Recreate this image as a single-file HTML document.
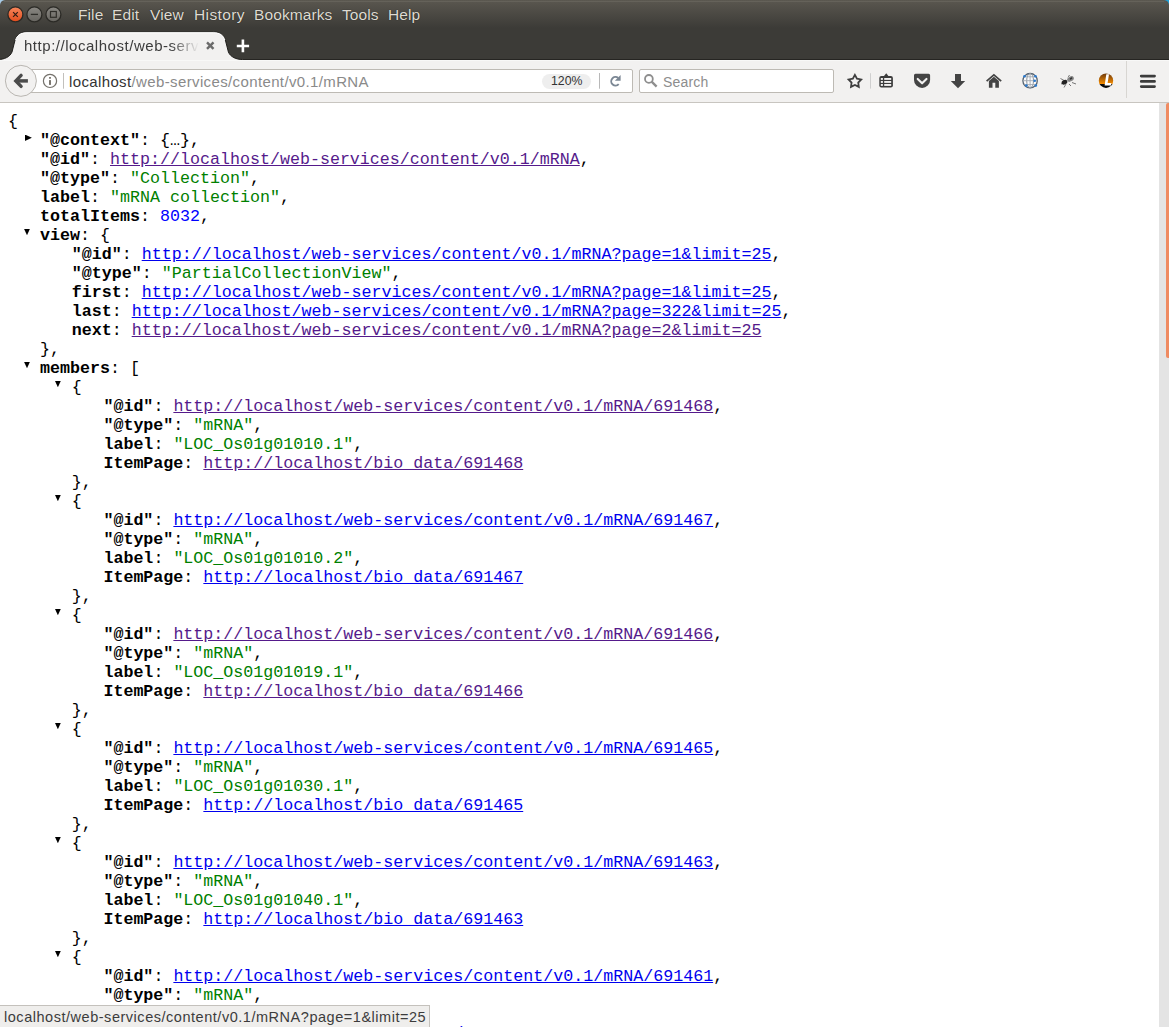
<!DOCTYPE html>
<html><head><meta charset="utf-8">
<style>
html,body{margin:0;padding:0;}
body{width:1169px;height:1027px;overflow:hidden;position:relative;background:#fff;font-family:"Liberation Sans",sans-serif;}
.abs{position:absolute;}
#titlebar{position:absolute;left:0;top:0;width:1169px;height:59px;background:linear-gradient(#5b5850 0px,#56534c 4px,#3c3b37 28px,#3c3b37 59px);}
#tline{position:absolute;left:0;top:59px;width:1169px;height:1px;background:#262522;}
#navbar{position:absolute;left:0;top:60px;width:1169px;height:42px;background:#f2f1f0;}
#navline{position:absolute;left:0;top:102px;width:1169px;height:1px;background:#c8c5c0;}
.menu{position:absolute;top:5px;color:#dfdbd2;font-size:15.5px;line-height:20px;white-space:nowrap;letter-spacing:0.1px;text-shadow:0 0 1px rgba(0,0,0,0.7);}
#content{position:absolute;left:0;top:103px;width:1159px;height:924px;overflow:hidden;background:#fff;}
#json{position:absolute;left:0;top:9px;font-family:"Liberation Mono",monospace;font-size:16.664px;line-height:19px;white-space:pre;color:#000;}
.ln{position:absolute;height:19px;white-space:pre;}
.k{font-weight:bold;}
.s{color:#008000;}
.n{color:#0000ff;}
.u{color:#0000ee;text-decoration:underline;}
.v{color:#551a8b;text-decoration:underline;}
.tr{position:absolute;width:7px;height:6.3px;margin:3.6px 0 0 0;background:#000;clip-path:polygon(0 0,100% 50%,0 100%);}
.td{position:absolute;width:6.2px;height:6.7px;margin:2.5px 0 0 0;background:#000;clip-path:polygon(0 0,100% 0,50% 100%);}
#sb{position:absolute;left:1159px;top:103px;width:10px;height:924px;background:#e4e4e4;}
#thumb{position:absolute;left:1166px;top:103px;width:3px;height:255px;background:#ef8b62;border-radius:2px 0 0 2px;}
#status{position:absolute;left:0;top:1005px;width:430px;height:22px;background:#efeeec;border-top:1px solid #c4c1bc;border-right:1px solid #c4c1bc;box-sizing:border-box;}
#status span{position:absolute;left:4px;top:3px;font-size:14.5px;line-height:16px;color:#3c3c3c;white-space:nowrap;letter-spacing:0.53px;}
</style></head><body>
<div id="titlebar"></div>
<div id="tline"></div>
<div class="abs" style="left:4px;top:1px;width:1160px;height:1px;background:#65625a"></div>
<div id="navbar"></div>
<div id="navline"></div>

<!-- window buttons -->
<svg class="abs" style="left:0;top:0" width="70" height="30">
  <defs>
    <linearGradient id="gc" x1="0" y1="0" x2="0" y2="1"><stop offset="0" stop-color="#f7875c"/><stop offset="1" stop-color="#e24c1c"/></linearGradient>
    <linearGradient id="gg" x1="0" y1="0" x2="0" y2="1"><stop offset="0" stop-color="#8a8883"/><stop offset="1" stop-color="#676560"/></linearGradient>
  </defs>
  <circle cx="15.4" cy="14.4" r="7.5" fill="url(#gc)" stroke="#2b2925" stroke-width="1.3"/>
  <path d="M13.1 12.2 L17.8 16.9 M17.8 12.2 L13.1 16.9" stroke="#2e1c14" stroke-width="1.2"/>
  <circle cx="34.4" cy="14.4" r="7.5" fill="url(#gg)" stroke="#2b2a26" stroke-width="1.3"/>
  <path d="M30.8 14.4 H38" stroke="#2f2e2a" stroke-width="1.3"/>
  <circle cx="53.4" cy="14.4" r="7.5" fill="url(#gg)" stroke="#2b2a26" stroke-width="1.3"/>
  <rect x="50.5" y="11.5" width="5.8" height="5.8" fill="none" stroke="#2f2e2a" stroke-width="1.2"/>
  <path d="M0 5 Q0.5 0.5 5 0 L0 0 Z" fill="#a8cce8"/>
</svg>

<div class="menu" style="left:78px">File</div>
<div class="menu" style="left:112px">Edit</div>
<div class="menu" style="left:150px">View</div>
<div class="menu" style="left:194px;letter-spacing:0.38px">History</div>
<div class="menu" style="left:254px">Bookmarks</div>
<div class="menu" style="left:342px">Tools</div>
<div class="menu" style="left:388px">Help</div>


<svg class="abs" style="left:1159px;top:0" width="10" height="10"><path d="M10 5 Q9.5 0.5 5 0 L10 0 Z" fill="#1ea0d8"/></svg>
<!-- tab strip -->
<svg class="abs" style="left:0;top:28px" width="260" height="34">
  <path d="M-2 31.5 C4 31.5 10 29 12 24 L14.8 13 C16 8 19 3.8 27 3.8 L213.4 3.8 C221.4 3.8 224.4 8 225.6 13 L228.4 24 C230.4 29 236.4 31.5 242.4 31.5 L242.4 34 L-2 34 Z" fill="#f2f1f0"/>
  <path d="M-2 31.5 C4 31.5 10 29 12 24 L14.8 13 C16 8 19 3.8 27 3.8 L213.4 3.8 C221.4 3.8 224.4 8 225.6 13 L228.4 24 C230.4 29 236.4 31.5 242.4 31.5" fill="none" stroke="#1f1e1b" stroke-width="1"/>
  <path d="M15.6 12 C17 7.8 20 4.8 27 4.8 L213.4 4.8 C220.4 4.8 223.4 7.8 224.8 12" fill="none" stroke="#ffffff" stroke-width="1"/>
  <rect x="-2" y="32" width="264" height="3" fill="#f2f1f0"/>
  <path d="M207 14.3 L213.5 20.8 M213.5 14.3 L207 20.8" stroke="#6b6b6b" stroke-width="2.4" stroke-linecap="butt"/>
  <path d="M242.9 11.6 V24.3 M236.8 17.95 H249.1" stroke="#ffffff" stroke-width="2.6"/>
</svg>
<div class="abs" id="tabtext" style="left:24px;top:37px;font-size:15px;line-height:18px;color:#3c3c3c;white-space:nowrap;letter-spacing:0.53px;width:176px;overflow:hidden;-webkit-mask-image:linear-gradient(90deg,#000 146px,transparent 175px);">http://localhost/web-services/content/v0.1/mRNA</div>

<!-- nav bar -->
<div class="abs" style="left:0;top:60px;width:1169px;height:1px;background:#f8f8f7"></div>
<div class="abs" style="left:20px;top:69px;width:613px;height:24px;box-sizing:border-box;background:#fff;border:1px solid #bdbab4;border-radius:2px;"></div>
<div class="abs" style="left:639px;top:69px;width:195px;height:24px;box-sizing:border-box;background:#fff;border:1px solid #bdbab4;border-radius:2px;"></div>
<svg class="abs" style="left:0;top:60px" width="640" height="42">
  <circle cx="20.9" cy="20.85" r="15.5" fill="#f2f1f0" stroke="#b9b6b1" stroke-width="1"/>
  <path d="M27.9 20.9 H17" fill="none" stroke="#4b4b4b" stroke-width="3.5"/><path d="M21.1 15.4 L15.8 20.9 L21.1 26.4" fill="none" stroke="#4b4b4b" stroke-width="3.4" stroke-linecap="round" stroke-linejoin="miter"/>
  <circle cx="50" cy="20.9" r="6.6" fill="none" stroke="#74716b" stroke-width="1.2"/>
  <rect x="49" y="20.1" width="2" height="4.8" fill="#7a766f"/>
  <rect x="49" y="17.05" width="2" height="1.65" fill="#7a766f"/>
  <rect x="63" y="13" width="1" height="15.7" fill="#c2c0bc"/>
  <rect x="599" y="13" width="1" height="15.7" fill="#b8b8b8"/>
</svg>
<div class="abs" style="left:69px;top:73px;font-size:15px;line-height:18px;white-space:nowrap;letter-spacing:0.37px;color:#8a8a8a"><span style="color:#333">localhost</span>/web-services/content/v0.1/mRNA</div>
<div class="abs" style="left:542px;top:74px;width:49px;height:15px;border-radius:8px;background:#eeeeee;"></div>
<div class="abs" style="left:551px;top:74px;font-size:12.3px;line-height:15px;color:#333;white-space:nowrap">120%</div>
<svg class="abs" style="left:605px;top:70px" width="22" height="22">
  <path d="M13.2 7.9 A4.3 4.3 0 1 0 13.7 14.2" fill="none" stroke="#7b8794" stroke-width="1.9"/>
  <path d="M15.6 5.0 L15.6 10.8 L9.9 10.8 Z" fill="#7b8794"/>
</svg>
<svg class="abs" style="left:640px;top:70px" width="22" height="22">
  <circle cx="8.9" cy="8.9" r="3.9" fill="none" stroke="#8e8e8e" stroke-width="1.8"/>
  <path d="M11.6 11.6 L16.6 16.6" stroke="#8e8e8e" stroke-width="2.3" stroke-linecap="butt"/>
</svg>
<div class="abs" style="left:663px;top:74px;font-size:14px;line-height:17px;color:#8d8d8d;white-space:nowrap;letter-spacing:0.2px">Search</div>


<!-- toolbar icons -->
<svg class="abs" style="left:840px;top:60px" width="329" height="42">
  <path d="M14.90 14.90 L16.97 18.69 L21.21 19.48 L18.24 22.62 L18.80 26.89 L14.90 25.04 L11.00 26.89 L11.56 22.62 L8.59 19.48 L12.83 18.69 Z" fill="none" stroke="#3f3f3f" stroke-width="1.8" stroke-linejoin="miter"/>
  <rect x="30" y="13.2" width="1" height="15.4" fill="#cfcfcf"/>
  <!-- reading list -->
  <rect x="39.3" y="15.9" width="13.6" height="11.7" rx="2" fill="#3c3c3c"/>
  <path d="M43.6 16.6 L46.2 13.2 L48.8 16.6 Z" fill="#3c3c3c"/>
  <rect x="40.8" y="18" width="2.1" height="1.9" fill="#f2f1f0"/>
  <rect x="44.2" y="18" width="7" height="1.9" fill="#f2f1f0"/>
  <rect x="40.8" y="21" width="2.1" height="1.9" fill="#f2f1f0"/>
  <rect x="44.2" y="21" width="7" height="1.9" fill="#f2f1f0"/>
  <rect x="40.8" y="24" width="2.1" height="1.9" fill="#f2f1f0"/>
  <rect x="44.2" y="24" width="7" height="1.9" fill="#f2f1f0"/>
  <!-- pocket -->
  <path d="M74 15.3 Q74 13.8 75.5 13.8 L88.6 13.8 Q90.1 13.8 90.1 15.3 L90.1 19.9 A8.05 8 0 0 1 74 19.9 Z" fill="#444"/>
  <path d="M77.7 18.9 L82.1 23.3 L86.5 18.9" fill="none" stroke="#f2f1f0" stroke-width="2.1" stroke-linecap="round" stroke-linejoin="round"/>
  <!-- download -->
  <path d="M115 14.1 L121 14.1 L121 21 L125.2 21 L118 28.2 L110.8 21 L115 21 Z" fill="#444"/>
  <!-- home -->
  <path d="M146.6 21.2 L153.9 14.8 L161.2 21.2" fill="none" stroke="#444" stroke-width="1.7" stroke-linejoin="miter"/>
  <path d="M148.9 21 L153.9 16.8 L158.9 21 L158.9 27.7 L155.3 27.7 L155.3 22.7 L152.5 22.7 L152.5 27.7 L148.9 27.7 Z" fill="#444"/>
  <!-- globe -->
  <circle cx="190.1" cy="20.7" r="7.2" fill="#fbfbfc" stroke="#56626f" stroke-width="1.3"/>
  <ellipse cx="190.1" cy="20.7" rx="3.4" ry="7.2" fill="none" stroke="#8a939c" stroke-width="1"/>
  <path d="M190.1 13.5 V27.9 M183 20.7 H197.2 M184.2 16.8 H196 M184.2 24.6 H196" stroke="#a0a8b0" stroke-width="0.9"/>
  <circle cx="184.5" cy="16.2" r="1.3" fill="#2a7ad0"/>
  <circle cx="195.5" cy="16.2" r="1.3" fill="#2a7ad0"/>
  <circle cx="194.7" cy="20.7" r="1.3" fill="#2a7ad0"/>
  <circle cx="186.3" cy="25.6" r="1.3" fill="#2a7ad0"/>
  <circle cx="195.8" cy="25.6" r="1.3" fill="#2a7ad0"/>
  <!-- bug -->
  <g stroke="#555" stroke-width="0.8" fill="none">
    <path d="M220.5 18.5 L225 21 M221 24 L224.5 22.5 M224 27.5 L226 24 M228 17.5 L229.5 15 M232 22.5 L236 24 M229 24 L231 26"/>
  </g>
  <ellipse cx="224.5" cy="22.2" rx="3" ry="2.2" fill="#222" transform="rotate(-30 224.5 22.2)"/>
  <ellipse cx="230.5" cy="19" rx="3.6" ry="2.4" fill="#888" transform="rotate(-30 230.5 19)"/>
  <ellipse cx="231" cy="18.5" rx="1.5" ry="0.9" fill="#333" transform="rotate(-30 231 18.5)"/>
  <!-- L icon -->
  <defs>
    <linearGradient id="lg" x1="0" y1="0" x2="0" y2="1"><stop offset="0" stop-color="#6e3a0c"/><stop offset="0.7" stop-color="#f28a00"/><stop offset="0.72" stop-color="#111"/><stop offset="1" stop-color="#000"/></linearGradient>
  </defs>
  <circle cx="266" cy="20.7" r="7.2" fill="url(#lg)"/>
  <path d="M266.3 14.3 L269.0 14.3 L267.6 23.0 L271.4 23.0 L271.0 25.4 L264.6 25.4 Z" fill="#fff"/>
  <rect x="286" y="1" width="1" height="37" fill="#d8d6d2"/>
  <!-- hamburger -->
  <path d="M301.2 16.1 H314.6 M301.2 21.4 H314.6 M301.2 26.6 H314.6" stroke="#3c3c3c" stroke-width="2.6" stroke-linecap="round"/>
</svg>

<div id="content">
<div id="json">
<!--L-->
<div class="ln" style="left:8px;top:0px">{</div>
<div class="ln" style="left:40px;top:19px"><b class="k">&quot;@context&quot;</b>: {…},</div>
<div class="tr" style="left:24.9px;top:19px"></div>
<div class="ln" style="left:40px;top:38px"><b class="k">&quot;@id&quot;</b>: <span class="v">http://localhost/web-services/content/v0.1/mRNA</span>,</div>
<div class="ln" style="left:40px;top:57px"><b class="k">&quot;@type&quot;</b>: <span class="s">&quot;Collection&quot;</span>,</div>
<div class="ln" style="left:40px;top:76px"><b class="k">label</b>: <span class="s">&quot;mRNA collection&quot;</span>,</div>
<div class="ln" style="left:40px;top:95px"><b class="k">totalItems</b>: <span class="n">8032</span>,</div>
<div class="ln" style="left:40px;top:114px"><b class="k">view</b>: {</div>
<div class="td" style="left:23.9px;top:114px"></div>
<div class="ln" style="left:71.7px;top:133px"><b class="k">&quot;@id&quot;</b>: <span class="u">http://localhost/web-services/content/v0.1/mRNA?page=1&amp;limit=25</span>,</div>
<div class="ln" style="left:71.7px;top:152px"><b class="k">&quot;@type&quot;</b>: <span class="s">&quot;PartialCollectionView&quot;</span>,</div>
<div class="ln" style="left:71.7px;top:171px"><b class="k">first</b>: <span class="u">http://localhost/web-services/content/v0.1/mRNA?page=1&amp;limit=25</span>,</div>
<div class="ln" style="left:71.7px;top:190px"><b class="k">last</b>: <span class="u">http://localhost/web-services/content/v0.1/mRNA?page=322&amp;limit=25</span>,</div>
<div class="ln" style="left:71.7px;top:209px"><b class="k">next</b>: <span class="v">http://localhost/web-services/content/v0.1/mRNA?page=2&amp;limit=25</span></div>
<div class="ln" style="left:40px;top:228px">},</div>
<div class="ln" style="left:40px;top:247px"><b class="k">members</b>: [</div>
<div class="td" style="left:23.9px;top:247px"></div>
<div class="ln" style="left:71.7px;top:266px">{</div>
<div class="td" style="left:54.8px;top:266px"></div>
<div class="ln" style="left:103.4px;top:285px"><b class="k">&quot;@id&quot;</b>: <span class="v">http://localhost/web-services/content/v0.1/mRNA/691468</span>,</div>
<div class="ln" style="left:103.4px;top:304px"><b class="k">&quot;@type&quot;</b>: <span class="s">&quot;mRNA&quot;</span>,</div>
<div class="ln" style="left:103.4px;top:323px"><b class="k">label</b>: <span class="s">&quot;LOC_Os01g01010.1&quot;</span>,</div>
<div class="ln" style="left:103.4px;top:342px"><b class="k">ItemPage</b>: <span class="v">http://localhost/bio_data/691468</span></div>
<div class="ln" style="left:71.7px;top:361px">},</div>
<div class="ln" style="left:71.7px;top:380px">{</div>
<div class="td" style="left:54.8px;top:380px"></div>
<div class="ln" style="left:103.4px;top:399px"><b class="k">&quot;@id&quot;</b>: <span class="u">http://localhost/web-services/content/v0.1/mRNA/691467</span>,</div>
<div class="ln" style="left:103.4px;top:418px"><b class="k">&quot;@type&quot;</b>: <span class="s">&quot;mRNA&quot;</span>,</div>
<div class="ln" style="left:103.4px;top:437px"><b class="k">label</b>: <span class="s">&quot;LOC_Os01g01010.2&quot;</span>,</div>
<div class="ln" style="left:103.4px;top:456px"><b class="k">ItemPage</b>: <span class="u">http://localhost/bio_data/691467</span></div>
<div class="ln" style="left:71.7px;top:475px">},</div>
<div class="ln" style="left:71.7px;top:494px">{</div>
<div class="td" style="left:54.8px;top:494px"></div>
<div class="ln" style="left:103.4px;top:513px"><b class="k">&quot;@id&quot;</b>: <span class="v">http://localhost/web-services/content/v0.1/mRNA/691466</span>,</div>
<div class="ln" style="left:103.4px;top:532px"><b class="k">&quot;@type&quot;</b>: <span class="s">&quot;mRNA&quot;</span>,</div>
<div class="ln" style="left:103.4px;top:551px"><b class="k">label</b>: <span class="s">&quot;LOC_Os01g01019.1&quot;</span>,</div>
<div class="ln" style="left:103.4px;top:570px"><b class="k">ItemPage</b>: <span class="v">http://localhost/bio_data/691466</span></div>
<div class="ln" style="left:71.7px;top:589px">},</div>
<div class="ln" style="left:71.7px;top:608px">{</div>
<div class="td" style="left:54.8px;top:608px"></div>
<div class="ln" style="left:103.4px;top:627px"><b class="k">&quot;@id&quot;</b>: <span class="u">http://localhost/web-services/content/v0.1/mRNA/691465</span>,</div>
<div class="ln" style="left:103.4px;top:646px"><b class="k">&quot;@type&quot;</b>: <span class="s">&quot;mRNA&quot;</span>,</div>
<div class="ln" style="left:103.4px;top:665px"><b class="k">label</b>: <span class="s">&quot;LOC_Os01g01030.1&quot;</span>,</div>
<div class="ln" style="left:103.4px;top:684px"><b class="k">ItemPage</b>: <span class="u">http://localhost/bio_data/691465</span></div>
<div class="ln" style="left:71.7px;top:703px">},</div>
<div class="ln" style="left:71.7px;top:722px">{</div>
<div class="td" style="left:54.8px;top:722px"></div>
<div class="ln" style="left:103.4px;top:741px"><b class="k">&quot;@id&quot;</b>: <span class="u">http://localhost/web-services/content/v0.1/mRNA/691463</span>,</div>
<div class="ln" style="left:103.4px;top:760px"><b class="k">&quot;@type&quot;</b>: <span class="s">&quot;mRNA&quot;</span>,</div>
<div class="ln" style="left:103.4px;top:779px"><b class="k">label</b>: <span class="s">&quot;LOC_Os01g01040.1&quot;</span>,</div>
<div class="ln" style="left:103.4px;top:798px"><b class="k">ItemPage</b>: <span class="u">http://localhost/bio_data/691463</span></div>
<div class="ln" style="left:71.7px;top:817px">},</div>
<div class="ln" style="left:71.7px;top:836px">{</div>
<div class="td" style="left:54.8px;top:836px"></div>
<div class="ln" style="left:103.4px;top:855px"><b class="k">&quot;@id&quot;</b>: <span class="u">http://localhost/web-services/content/v0.1/mRNA/691461</span>,</div>
<div class="ln" style="left:103.4px;top:874px"><b class="k">&quot;@type&quot;</b>: <span class="s">&quot;mRNA&quot;</span>,</div>
<div class="ln" style="left:103.4px;top:893px"><b class="k">label</b>: <span class="s">&quot;LOC_Os01g01050.1&quot;</span>,</div>
<div class="ln" style="left:103.4px;top:912px"><b class="k">ItemPage</b>: <span class="u">http://localhost/bio_data/691461</span></div>
<div class="ln" style="left:71.7px;top:931px">},</div>
<!--/L-->
</div>
</div>

<div id="sb"></div>
<div id="thumb"></div>
<div id="status"><span>localhost/web-services/content/v0.1/mRNA?page=1&amp;limit=25</span></div>
</body></html>
